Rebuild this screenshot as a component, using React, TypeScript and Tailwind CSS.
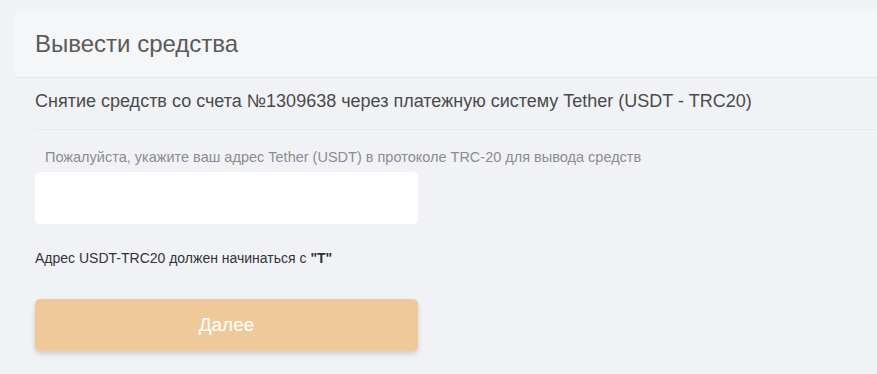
export default function App() {
  return (
    <div className="min-h-[374px] w-full bg-[#f1f2f6] pt-[11px] pl-[15px] font-['Liberation_Sans',Arial,sans-serif]">
      {/* Header */}
      <div className="h-[67px] border-b border-[#e3e5e8] bg-[#f5f6f7] pl-[20px] pt-[18px]">
        <h1 className="text-[24px] leading-[30px] font-light text-[#5a5a5a]">Вывести средства</h1>
      </div>

      {/* Body */}
      <div className="pl-[20px]">
        <div className="border-b border-[#e6e8ec] pt-[11px] pb-[16px]">
          <p className="text-[18px] leading-[24px] text-[#4a4a4a]">
            Снятие средств со счета №1309638 через платежную систему Tether (USDT - TRC20)
          </p>
        </div>

        <div className="pt-[19px]">
          <label className="block whitespace-nowrap pl-[10px] text-[14.5px] leading-[17px] text-[#8c8c8c]">
            Пожалуйста, укажите ваш адрес Tether (USDT) в протоколе TRC-20 для вывода средств
          </label>
          <input
            type="text"
            className="mt-[6px] block h-[52px] w-[383px] rounded-[5px] bg-white px-3 text-[15px] text-[#333] outline-none"
          />
          <p className="mt-[26px] text-[14px] leading-[17px] text-[#333333]">
            Адрес USDT-TRC20 должен начинаться с <b>"T"</b>
          </p>
          <button className="mt-[32px] h-[52px] w-[383px] rounded-[5px] bg-[#efc999] text-[19px] text-white shadow-[0_3px_5px_rgba(0,0,0,0.15)]">
            Далее
          </button>
        </div>
      </div>
    </div>
  );
}
